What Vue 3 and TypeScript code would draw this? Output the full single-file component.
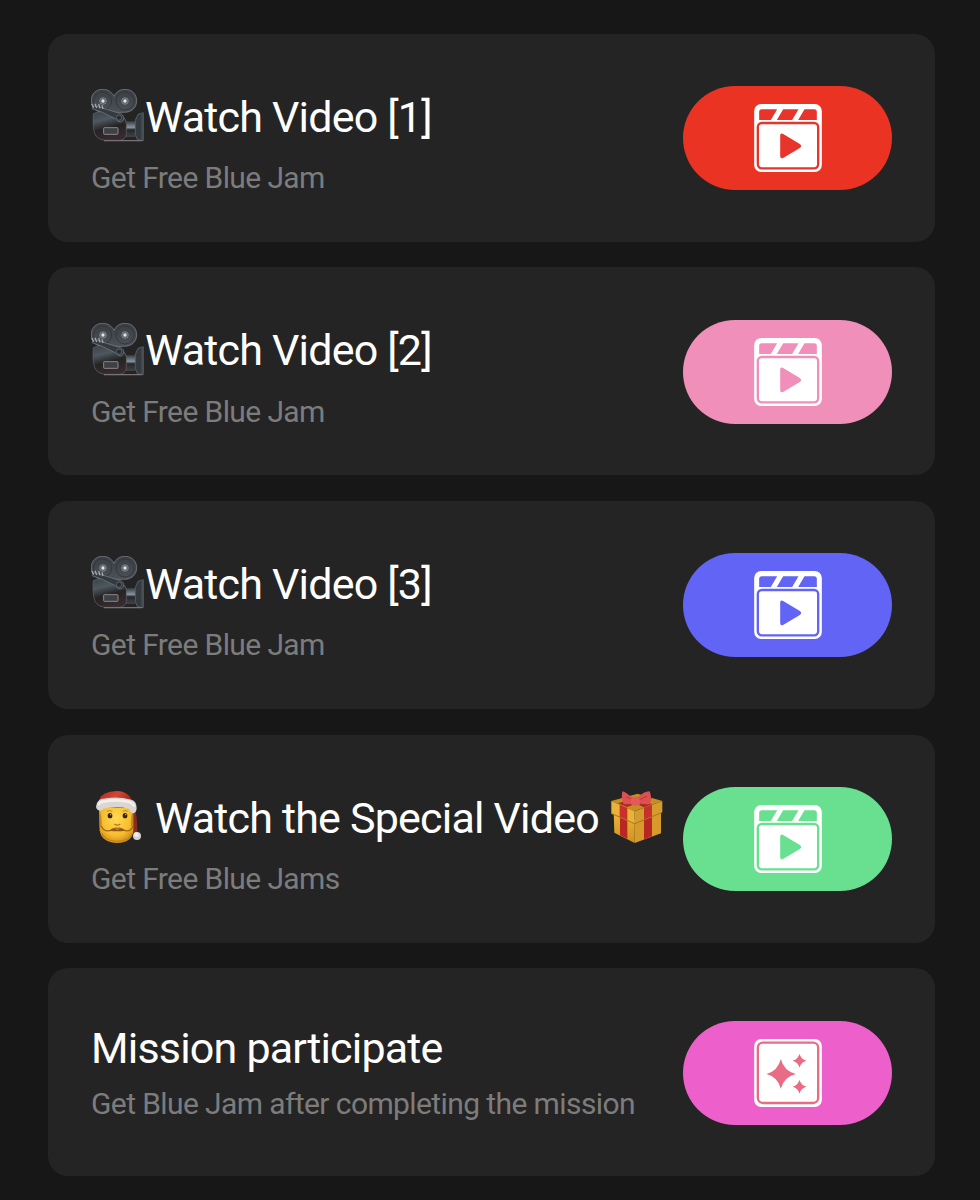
<script setup lang="ts">
interface Mission {
  title: string
  subtitle: string
  color: string
  lead?: 'camera' | 'santa'
  gift?: boolean
  icon: 'clapper' | 'sparkle'
  accent: string
}

const missions: Mission[] = [
  { title: 'Watch Video [1]', subtitle: 'Get Free Blue Jam', color: '#eb3323', accent: '#e8352b', lead: 'camera', icon: 'clapper' },
  { title: 'Watch Video [2]', subtitle: 'Get Free Blue Jam', color: '#f08fba', accent: '#f08fba', lead: 'camera', icon: 'clapper' },
  { title: 'Watch Video [3]', subtitle: 'Get Free Blue Jam', color: '#6264f6', accent: '#6264f6', lead: 'camera', icon: 'clapper' },
  { title: 'Watch the Special Video', subtitle: 'Get Free Blue Jams', color: '#69e090', accent: '#69e090', lead: 'santa', gift: true, icon: 'clapper' },
  { title: 'Mission participate', subtitle: 'Get Blue Jam after completing the mission', color: '#ed5fcb', accent: '#e96b84', icon: 'sparkle' },
]
</script>

<template>
  <main class="page">
    <svg class="defs" aria-hidden="true">
      <defs>
        <linearGradient id="reel" x1="0" y1="0" x2="0" y2="1"><stop offset="0" stop-color="#3b3e43" /><stop offset="1" stop-color="#4b5158" /></linearGradient>
        <linearGradient id="body" x1="0" y1="0" x2="0.3" y2="1"><stop offset="0" stop-color="#3b4045" /><stop offset="0.35" stop-color="#4d5860" /><stop offset="0.65" stop-color="#252323" /><stop offset="1" stop-color="#352a2c" /></linearGradient>
        <linearGradient id="lens" x1="0" y1="0" x2="0" y2="1"><stop offset="0" stop-color="#34383d" /><stop offset="0.4" stop-color="#8695a1" /><stop offset="0.55" stop-color="#25282b" /><stop offset="1" stop-color="#424347" /></linearGradient>
        <radialGradient id="face" cx="0.5" cy="0.4" r="0.65"><stop offset="0" stop-color="#ffda53" /><stop offset="0.65" stop-color="#f6bd2d" /><stop offset="1" stop-color="#c78416" /></radialGradient>
        <linearGradient id="hat" x1="0" y1="0" x2="1" y2="0.5"><stop offset="0" stop-color="#a92720" /><stop offset="0.5" stop-color="#d34834" /><stop offset="1" stop-color="#94251c" /></linearGradient>
        <linearGradient id="box" x1="0" y1="0" x2="0" y2="1"><stop offset="0" stop-color="#edb834" /><stop offset="1" stop-color="#cf9023" /></linearGradient>
      </defs>
    </svg>
    <section v-for="m in missions" :key="m.title" class="card" :class="{ plain: !m.lead }">
      <div class="copy">
        <h2 class="title">
          <svg v-if="m.lead === 'camera'" class="emoji" viewBox="33 27 159 159" aria-hidden="true">
            <path d="M34 62C33 43 47 28 68 28c16 0 27 8 34 21 6-13 17-21 33-21 21 0 35 15 35 34 0 21-15 35-37 35H66C47 96 35 81 34 62z" fill="url(#reel)" stroke="#858a91" stroke-width="2" />
            <circle cx="68" cy="63" r="27" fill="none" stroke="#34373b" stroke-width="3" />
            <circle cx="135" cy="63" r="27" fill="none" stroke="#34373b" stroke-width="3" />
            <circle cx="69" cy="63" r="10" fill="#5b6369" stroke="#8a9197" stroke-width="2" />
            <circle cx="135" cy="63" r="10" fill="#5b6369" stroke="#8a9197" stroke-width="2" />
            <circle cx="69" cy="63" r="5" fill="#e1e4e6" /><circle cx="135" cy="63" r="5" fill="#e1e4e6" />
            <path d="M138 123h28v48h-28z" fill="url(#lens)" />
            <path d="M166 121l8-18 16-5v84l-18-3-6-16z" fill="#343a40" stroke="#697079" stroke-width="2" />
            <path d="M186 102v77" stroke="#626970" stroke-width="2" />
            <path d="M40 101Q64 89 95 99L128 111Q139 116 139 130V164Q136 179 119 181H75Q50 178 44 160 37 138 40 101z" fill="url(#body)" stroke="#62676c" stroke-width="2" />
            <path d="M43 77l79 24q11 5 9 18l-8 7q-11 1-17-10L67 97 36 86z" fill="#343a40" stroke="#777e86" stroke-width="2" />
            <path d="M35 72l6 11m4-12 5 13m6-12 4 13m6-9 3 11" stroke="#a1a8ae" stroke-width="4" />
            <circle cx="117" cy="113" r="8" fill="#252d34" stroke="#6e7881" stroke-width="2" />
            <path d="M72 182h115" stroke="#777176" stroke-width="4" />
            <rect x="71" y="143" width="43" height="20" rx="2" fill="#3e4045" stroke="#8d878b" stroke-width="3" />
          </svg>
          <svg v-else-if="m.lead === 'santa'" class="emoji santa" viewBox="33 27 159 159" aria-hidden="true">
            <path d="M145 58q22 17 25 52l3 52h-12l-12-48z" fill="#8b2b20" />
            <path d="M57 73q53-21 103 0v75q-2 37-48 38-48-1-53-38z" fill="url(#face)" />
            <path d="M59 92q7 10 6 42l-6 6zm100 0q-7 10-6 42l6 6z" fill="#c48820" />
            <path d="M58 55q8-23 52-25 38 0 48 35l-4 17-97-5z" fill="url(#hat)" />
            <path d="M49 73q2-14 15-19 45-10 90 2 16 4 16 26-1 13-10 15-8 0-12-13-38-12-78-1-5 9-15 5-9-5-6-15z" fill="#d9d6d4" />
            <path d="M57 69q7-9 18-8 31-6 62 0 15-1 25 13" fill="none" stroke="#f1eeeb" stroke-width="8" stroke-linecap="round" />
            <ellipse cx="90" cy="104" rx="7" ry="8" fill="#392008" /><ellipse cx="135" cy="104" rx="7" ry="8" fill="#392008" />
            <circle cx="92" cy="101" r="2" fill="#d7c69b" /><circle cx="137" cy="101" r="2" fill="#d7c69b" />
            <path d="M81 91q8-4 16 0m31 0q8-4 15 0" fill="none" stroke="#c1842a" stroke-width="3" />
            <path d="M103 129q9 7 18 0" fill="none" stroke="#b87523" stroke-width="4" />
            <path d="M64 135Q72 153 89 149 102 139 112 142 123 139 136 149 151 153 160 135" fill="none" stroke="#a4661a" stroke-width="4" />
            <path d="M89 149Q101 140 112 146 123 140 136 149 112 153 89 149z" fill="#925513" />
            <path d="M66 158q9 22 45 23 36-1 46-23" fill="none" stroke="#bd7c1c" stroke-width="3" />
            <circle cx="171" cy="165" r="12" fill="#d6d2cf" /><circle cx="169" cy="161" r="7" fill="#f1eeeb" />
          </svg>
          <span class="label">{{ m.title }}</span>
          <svg v-if="m.gift" class="emoji gift" viewBox="33 27 159 159" aria-hidden="true">
            <path d="M41 91l63 25v70l-61-31z" fill="url(#box)" /><path d="M104 116l79-30v71l-79 29z" fill="#d69b2b" />
            <path d="M60 99l22 9v66l-22-11zM132 105l24-9v70l-24 9z" fill="#b82722" />
            <path d="M34 60l79-22 74 22-84 31z" fill="#c88d22" />
            <path d="M54 67l27 11 76-26-26-8zM79 44l77 25-24 10-71-32z" fill="#a92b20" />
            <path d="M34 60l70 31v37L34 98z" fill="#e8b337" /><path d="M104 91l83-31v34l-83 34z" fill="#d49c2d" />
            <path d="M59 71l23 10v38l-23-10zM132 80l24-9v37l-24 9z" fill="#c92f2c" />
            <path d="M36 98l68 30 81-33" fill="none" stroke="#a8751f" stroke-width="3" />
            <path d="M97 52Q80 34 67 31q-4 19 3 37 14 5 28-2zM113 51q16-19 36-20 7 17 2 37-20 4-35-2z" fill="#df5052" />
            <path d="M96 56L79 47m37 10 25-11" stroke="#b7353a" stroke-width="3" />
            <path d="M92 52q12-9 26 0l3 18q-14 8-29 0z" fill="#e35b59" />
          </svg>
        </h2>
        <p class="subtitle">{{ m.subtitle }}</p>
      </div>
      <button class="action" type="button" :style="{ backgroundColor: m.color }" :aria-label="m.title">
        <svg v-if="m.icon === 'clapper'" class="icon" viewBox="42 42 203 204">
          <rect x="42" y="42" width="203" height="204" rx="21" fill="#fff" />
          <path d="M65 58h46L92 90H57V66q0-8 8-8zM129 58h46l-19 32h-46zM193 58h29q8 0 8 8v24h-56z" :fill="m.accent" />
          <rect x="53" y="99" width="181" height="136" rx="12" fill="none" :stroke="m.accent" stroke-width="7" />
          <path d="M120 137q0-9 9-5l50 30q8 6 0 12l-49 29q-10 5-10-6z" :fill="m.accent" />
        </svg>
        <svg v-else class="icon" viewBox="42 42 203 204">
          <rect x="42" y="42" width="203" height="204" rx="21" fill="#fff" />
          <rect x="53" y="53" width="181" height="181" rx="15" fill="none" :stroke="m.accent" stroke-width="7" />
          <path d="M122 102Q131 138 167 147 131 156 122 191 113 156 79 147 113 138 122 102zM178 86q4 16 21 21-17 5-21 21-4-16-21-21 17-5 21-21zM178 164q4 16 21 21-17 5-21 21-4-16-21-21 17-5 21-21z" :fill="m.accent" />
        </svg>
      </button>
    </section>
  </main>
</template>

<style scoped>
.page {
  box-sizing: border-box;
  width: 980px;
  height: 1200px;
  overflow: hidden;
  padding: 33.6px 45px 0 48px;
  display: flex;
  flex-direction: column;
  gap: 25.6px;
  background: #171717;
  font-family: Roboto, "Noto Sans", sans-serif;
}
.defs { position: absolute; width: 0; height: 0; }
.card {
  box-sizing: border-box;
  flex: 0 0 208.1px;
  display: flex;
  align-items: center;
  justify-content: space-between;
  padding: 0 43px;
  border-radius: 20px;
  background: #242424;
}
.copy {
  align-self: flex-start;
  width: 592px;
  flex: none;
  padding-top: 58px;
  white-space: nowrap;
}
.title {
  display: flex;
  align-items: center;
  margin: 0;
  height: 50px;
  font-size: 43px;
  font-weight: 400;
  line-height: 50px;
  letter-spacing: -0.8px;
  color: #fff;
}
.emoji { flex: none; width: 53px; height: 53px; margin: -2px 1px 0 0; }
.santa { margin-right: 11px; }
.gift { margin: -2px 0 0 12.5px; }
.subtitle {
  margin: 18.5px 0 0;
  font-size: 30px;
  line-height: 36px;
  letter-spacing: -0.6px;
  color: #7c7c7c;
}
.plain .copy { padding-top: 55px; }
.plain .subtitle { margin-top: 12.5px; }
.action {
  flex: none;
  display: flex;
  align-items: center;
  justify-content: center;
  width: 209px;
  height: 104px;
  margin-top: 0.9px;
  padding: 0;
  border: 0;
  border-radius: 52px;
}
.icon { width: 68px; height: 68px; }
</style>
<style>
body { background: #171717; }
</style>
